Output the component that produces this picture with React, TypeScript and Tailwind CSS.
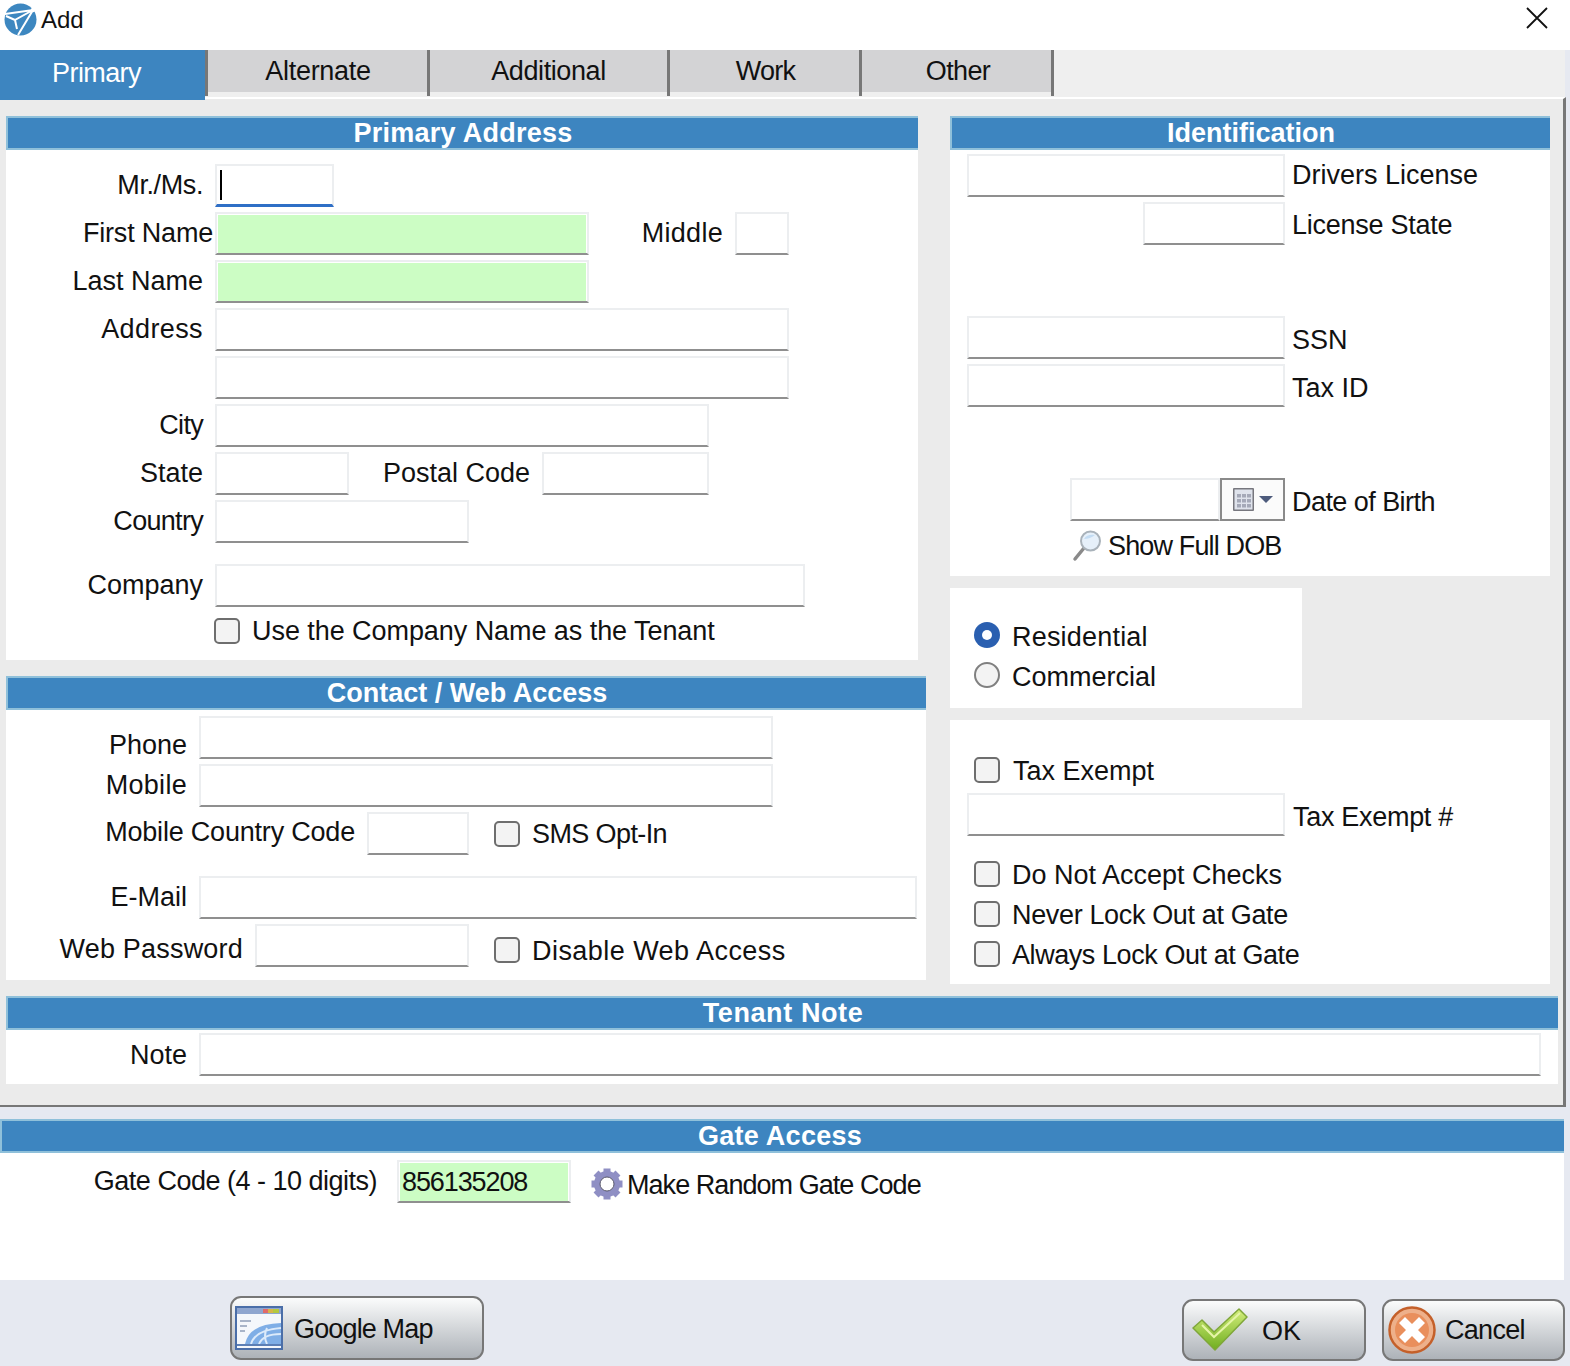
import type { ReactNode } from 'react';

const TABS = [
  { label: 'Alternate', w: 'w-[222px]', track: 'tracking-[-0.3px] pl-[1px]' },
  { label: 'Additional', w: 'w-[240px]', track: 'tracking-[-0.4px]' },
  { label: 'Work', w: 'w-[192px]', track: 'tracking-[-0.7px] pl-[2px]' },
  { label: 'Other', w: 'w-[192px]', track: 'tracking-[-0.6px] pl-[3px]' },
];

const LOCK_ROWS = [
  { label: 'Do Not Accept Checks', track: '' },
  { label: 'Never Lock Out at Gate', track: 'tracking-[-0.35px]' },
  { label: 'Always Lock Out at Gate', track: 'tracking-[-0.43px]' },
];

function Input({ className = '', green = false, children }: { className?: string; green?: boolean; children?: ReactNode }) {
  return (
    <div className={`h-[43px] shrink-0 bg-white border-2 border-[#eceef0] border-b-[#8f8f8f] ${className}`}>
      {green ? <div className="h-[calc(100%-1px)] mt-[1px] mx-[1px] bg-[#ccfdc4]">{children}</div> : children}
    </div>
  );
}

function Label({ className = '', lh = 'leading-[42px]', children }: { className?: string; lh?: string; children: ReactNode }) {
  return <div className={`h-[43px] shrink-0 whitespace-nowrap ${lh} ${className}`}>{children}</div>;
}

function Header({ title, className = '' }: { title: string; className?: string }) {
  return (
    <div className={`h-[34px] bg-[#3d85c0] border-y-2 border-l-2 border-[#8fc0da] text-white font-bold text-center leading-[30px] ${className}`}>
      {title}
    </div>
  );
}

function Check({ className = '' }: { className?: string }) {
  return <div className={`w-[26px] h-[26px] shrink-0 bg-[#f3f3f3] border-2 border-[#6e6e6e] rounded-[5px] ${className}`} />;
}

function Radio({ on = false }: { on?: boolean }) {
  if (on) {
    return (
      <div className="w-[26px] h-[26px] shrink-0 rounded-full bg-[#2a5fb0] flex items-center justify-center">
        <div className="w-[10px] h-[10px] rounded-full bg-white" />
      </div>
    );
  }
  return <div className="w-[26px] h-[26px] shrink-0 rounded-full bg-[#f3f3f3] border-2 border-[#808080]" />;
}

function LogoIcon() {
  return (
    <svg width="33" height="33" viewBox="0 0 33 33" className="shrink-0">
      <circle cx="16.5" cy="16.5" r="16" fill="#3d87c0" />
      <path d="M1 11 L29 7 L14 32 M29 7 L11 17 L13 26 M11 17 L2 13" fill="none" stroke="#fff" strokeWidth="2" />
      <circle cx="29" cy="7" r="2.2" fill="#fff" />
    </svg>
  );
}

function CalendarIcon() {
  return (
    <svg width="24" height="25" viewBox="0 0 24 25">
      <rect x="1" y="1" width="21" height="23" rx="1" fill="#77777e" />
      <rect x="2.5" y="2.5" width="18" height="20" fill="#dfe3ec" />
      <g fill="#a5a9b8">
        <rect x="5" y="7" width="4" height="3.5" />
        <rect x="10" y="7" width="4" height="3.5" />
        <rect x="15" y="7" width="4" height="3.5" />
        <rect x="5" y="12" width="4" height="3.5" />
        <rect x="10" y="12" width="4" height="3.5" />
        <rect x="15" y="12" width="4" height="3.5" />
        <rect x="5" y="17" width="4" height="3.5" />
        <rect x="10" y="17" width="4" height="3.5" />
        <rect x="15" y="17" width="4" height="3.5" />
      </g>
    </svg>
  );
}

function MagnifierIcon() {
  return (
    <svg width="30" height="32" viewBox="0 0 30 32" className="shrink-0">
      <path d="M12 18 L3 29" stroke="#8a8a8a" strokeWidth="3.5" strokeLinecap="round" />
      <circle cx="18.5" cy="11" r="9.5" fill="#e6f0fa" stroke="#a9b2ba" strokeWidth="2" />
      <path d="M12 9 Q15 4 23 5 Q18 9 12 9" fill="#c3dcf3" />
    </svg>
  );
}

function GearIcon() {
  return (
    <svg width="32" height="32" viewBox="0 0 32 32" className="shrink-0">
      <g fill="#8f8fc4">
        {[0, 45, 90, 135, 180, 225, 270, 315].map((a) => (
          <rect key={a} x="12.5" y="0.5" width="7" height="7" transform={`rotate(${a} 16 16)`} />
        ))}
      </g>
      <circle cx="16" cy="16" r="10" fill="none" stroke="#8f8fc4" strokeWidth="6" />
      <circle cx="16" cy="16" r="7" fill="#fff" stroke="#55556a" strokeWidth="1" />
    </svg>
  );
}

function MapIcon() {
  return (
    <svg width="48" height="44" viewBox="0 0 48 44" className="shrink-0">
      <rect x="1" y="1" width="46" height="42" fill="#f4f7fb" stroke="#4a6ea8" strokeWidth="2" />
      <rect x="2" y="2" width="44" height="6" fill="#8fa6cf" />
      <rect x="28" y="3" width="5" height="4" fill="#e06a6a" />
      <rect x="33" y="3" width="5" height="4" fill="#d7b54a" />
      <rect x="38" y="3" width="6" height="4" fill="#b5c93f" />
      <path d="M5 15 H16 M5 20 H12 M5 25 H10" stroke="#8f9fb8" strokeWidth="1.5" />
      <path d="M10 38 Q14 18 46 17 V38 Z" fill="#7faee6" />
      <path d="M16 38 Q20 24 46 22 M24 38 Q28 28 46 28 M32 22 Q28 30 32 38" stroke="#dceafa" strokeWidth="2" fill="none" />
      <rect x="2" y="38" width="44" height="2" fill="#5c7fb5" />
    </svg>
  );
}

function CheckIcon() {
  return (
    <svg width="56" height="44" viewBox="0 0 56 44" className="shrink-0">
      <defs>
        <linearGradient id="okGrad" x1="0" y1="0" x2="0" y2="1">
          <stop offset="0" stopColor="#d4ee7c" />
          <stop offset="1" stopColor="#6fae1f" />
        </linearGradient>
      </defs>
      <path d="M1 20 L10 12 L22 24 L47 1 L55 9 L23 42 Z" fill="url(#okGrad)" stroke="#7fa63a" strokeWidth="1.5" strokeLinejoin="round" />
      <path d="M10 17 L22 29 L48 5" fill="none" stroke="#e6f5a8" strokeWidth="2" />
    </svg>
  );
}

function CancelIcon() {
  return (
    <svg width="48" height="48" viewBox="0 0 48 48" className="shrink-0">
      <circle cx="24" cy="24" r="22.5" fill="#eeb08a" stroke="#c4602a" strokeWidth="2.5" />
      <circle cx="24" cy="24" r="17" fill="#e98f5c" />
      <path d="M11 17 L17 11 L24 18 L31 11 L37 17 L30 24 L37 31 L31 37 L24 30 L17 37 L11 31 L18 24 Z" fill="#fff" />
    </svg>
  );
}

function Button({ className = '', children }: { className?: string; children: ReactNode }) {
  return (
    <div className={`flex items-center shrink-0 border-2 border-[#777777] rounded-[11px] bg-gradient-to-b from-[#fbfcfc] to-[#adb2b8] ${className}`}>
      {children}
    </div>
  );
}

function PrimaryAddress() {
  return (
    <div className="bg-white h-[544px]">
      <Header title="Primary Address" className="tracking-[0.27px]" />
      <div className="pt-[14px]">
        <div className="flex h-[48px]">
          <Label className="w-[197px] text-right tracking-[-0.4px]">Mr./Ms.</Label>
          <Input className="ml-[12px] w-[119px] !border-b-[3px] !border-b-[#2f6fc6] pl-[3px] pt-[4px]">
            <div className="w-[2px] h-[30px] bg-black" />
          </Input>
        </div>
        <div className="flex h-[48px]">
          <Label className="w-[207px] text-right tracking-[-0.2px]">First Name</Label>
          <Input className="ml-[2px] w-[374px]" green />
          <Label className="w-[134px] text-right tracking-[0.3px]">Middle</Label>
          <Input className="ml-[12px] w-[54px]" />
        </div>
        <div className="flex h-[48px]">
          <Label className="w-[197px] text-right">Last Name</Label>
          <Input className="ml-[12px] w-[374px]" green />
        </div>
        <div className="flex h-[48px]">
          <Label className="w-[197px] text-right tracking-[0.4px]">Address</Label>
          <Input className="ml-[12px] w-[574px]" />
        </div>
        <div className="flex h-[48px] pl-[209px]">
          <Input className="w-[574px]" />
        </div>
        <div className="flex h-[48px]">
          <Label className="w-[197px] text-right tracking-[-0.7px]">City</Label>
          <Input className="ml-[12px] w-[494px]" />
        </div>
        <div className="flex h-[48px]">
          <Label className="w-[197px] text-right">State</Label>
          <Input className="ml-[12px] w-[134px]" />
          <Label className="w-[181px] text-right">Postal Code</Label>
          <Input className="ml-[12px] w-[167px]" />
        </div>
        <div className="flex h-[64px]">
          <Label className="w-[197px] text-right tracking-[-0.7px]">Country</Label>
          <Input className="ml-[12px] w-[254px]" />
        </div>
        <div className="flex h-[46px]">
          <Label className="w-[197px] text-right">Company</Label>
          <Input className="ml-[12px] w-[590px]" />
        </div>
        <div className="flex items-center h-[42px] pl-[208px] gap-[12px]">
          <Check />
          <span className="tracking-[-0.06px]">Use the Company Name as the Tenant</span>
        </div>
      </div>
    </div>
  );
}

function ContactAccess() {
  return (
    <div className="bg-white h-[304px] w-[920px] mt-[16px]">
      <Header title="Contact / Web Access" />
      <div className="pt-[6px]">
        <div className="flex h-[48px]">
          <Label className="w-[181px] text-right" lh="leading-[58px]">Phone</Label>
          <Input className="ml-[12px] w-[574px]" />
        </div>
        <div className="flex h-[48px]">
          <Label className="w-[181px] text-right tracking-[0.3px]" lh="leading-[42px]">Mobile</Label>
          <Input className="ml-[12px] w-[574px]" />
        </div>
        <div className="flex h-[64px]">
          <Label className="w-[349px] text-right tracking-[-0.2px]" lh="leading-[40px]">Mobile Country Code</Label>
          <Input className="ml-[12px] w-[102px]" />
          <div className="flex items-center h-[43px] ml-[25px] gap-[12px]">
            <Check />
            <span className="mt-[2px] tracking-[-0.6px]">SMS Opt-In</span>
          </div>
        </div>
        <div className="flex h-[48px]">
          <Label className="w-[181px] text-right">E-Mail</Label>
          <Input className="ml-[12px] w-[718px]" />
        </div>
        <div className="flex h-[48px]">
          <Label className="w-[237px] text-right tracking-[0.2px]" lh="leading-[50px]">Web Password</Label>
          <Input className="ml-[12px] w-[214px]" />
          <div className="flex items-center h-[43px] ml-[25px] gap-[12px] mt-[4px]">
            <Check />
            <span className="mt-[4px] tracking-[0.45px]">Disable Web Access</span>
          </div>
        </div>
      </div>
    </div>
  );
}

function Identification() {
  return (
    <div className="bg-white h-[460px]">
      <Header title="Identification" />
      <div className="pt-[4px]">
        <div className="flex h-[48px]">
          <div className="w-[335px] flex justify-end"><Input className="w-[318px]" /></div>
          <Label className="ml-[7px]">Drivers License</Label>
        </div>
        <div className="flex h-[114px]">
          <div className="w-[335px] flex justify-end"><Input className="w-[142px]" /></div>
          <Label className="ml-[7px] tracking-[-0.25px]" lh="leading-[46px]">License State</Label>
        </div>
        <div className="flex h-[48px]">
          <div className="w-[335px] flex justify-end"><Input className="w-[318px]" /></div>
          <Label className="ml-[7px]" lh="leading-[48px]">SSN</Label>
        </div>
        <div className="flex h-[114px]">
          <div className="w-[335px] flex justify-end"><Input className="w-[318px]" /></div>
          <Label className="ml-[7px]" lh="leading-[48px]">Tax ID</Label>
        </div>
        <div className="flex h-[48px]">
          <div className="w-[335px] flex justify-end">
            <Input className="w-[150px]" />
            <div className="w-[65px] h-[43px] shrink-0 border-2 border-[#8a8a8a] bg-[#fbfbfb] flex items-center justify-center gap-[3px]">
              <CalendarIcon />
              <svg width="14" height="7" viewBox="0 0 14 7"><path d="M0 0 H14 L7 7 Z" fill="#4d5b7c" /></svg>
            </div>
          </div>
          <Label className="ml-[7px] tracking-[-0.55px]" lh="leading-[48px]">Date of Birth</Label>
        </div>
        <div className="flex items-center h-[40px] pl-[122px] gap-[6px]">
          <MagnifierIcon />
          <span className="tracking-[-0.85px]">Show Full DOB</span>
        </div>
      </div>
    </div>
  );
}

function CustomerType() {
  return (
    <div className="bg-white h-[120px] w-[352px] mt-[12px] pt-[27px] pl-[24px]">
      <div className="flex items-center h-[40px] gap-[12px]">
        <Radio on />
        <span className="mt-[4px] tracking-[0.2px]">Residential</span>
      </div>
      <div className="flex items-center h-[40px] gap-[12px]">
        <Radio />
        <span className="mt-[4px]">Commercial</span>
      </div>
    </div>
  );
}

function TaxOptions() {
  return (
    <div className="bg-white h-[264px] mt-[12px] pt-[30px]">
      <div className="flex items-center h-[40px] pl-[24px] gap-[13px]">
        <Check />
        <span className="mt-[2px]">Tax Exempt</span>
      </div>
      <div className="flex h-[61px] mt-[3px]">
        <div className="w-[335px] flex justify-end"><Input className="w-[318px]" /></div>
        <Label className="ml-[8px] tracking-[-0.3px]" lh="leading-[48px]">Tax Exempt #</Label>
      </div>
      {LOCK_ROWS.map((r) => (
        <div key={r.label} className="flex items-center h-[40px] pl-[24px] gap-[12px]">
          <Check />
          <span className={`mt-[2px] ${r.track}`}>{r.label}</span>
        </div>
      ))}
    </div>
  );
}

export default function App() {
  return (
    <div className="w-[1570px] h-[1366px] overflow-hidden bg-[#e6e9f1] text-[27px] text-[#111111] font-['Liberation_Sans',Arial,sans-serif]">
      {/* Title bar */}
      <div className="h-[50px] bg-white flex items-start pl-[4px] pt-[3px]">
        <div className="flex items-center h-[33px]">
          <LogoIcon />
          <span className="ml-[4px] text-[24px]">Add</span>
        </div>
        <svg width="22" height="22" viewBox="0 0 22 22" className="ml-auto mr-[22px] mt-[4px]">
          <path d="M1 1 L21 21 M21 1 L1 21" stroke="#111" strokeWidth="1.8" />
        </svg>
      </div>

      {/* Tabs */}
      <div className="h-[47px] w-[1565px] bg-[#efefef] flex items-start">
        <div className="w-[205px] h-[50px] shrink-0 bg-[#3d85c0] text-white text-center pr-[12px] tracking-[-0.6px] leading-[46px] relative z-10">Primary</div>
        <div className="w-[3px] h-[46px] shrink-0 bg-[#777777]" />
        {TABS.map((t) => (
          <div key={t.label} className={`${t.w} h-[46px] flex shrink-0`}>
            <div className={`flex-1 h-[42px] bg-[#d3d3d5] text-center leading-[42px] ${t.track}`}>{t.label}</div>
            <div className="w-[3px] h-[46px] bg-[#777777]" />
          </div>
        ))}
      </div>

      {/* Main panel */}
      <div className="w-[1566px] h-[1010px] bg-[#ebebeb] border-t-2 border-t-white border-r-[3px] border-r-[#777777] border-b-2 border-b-[#777777] pt-[17px] pl-[6px]">
        <div className="flex">
          <div className="w-[912px]">
            <PrimaryAddress />
            <ContactAccess />
          </div>
          <div className="w-[600px] ml-[32px]">
            <Identification />
            <CustomerType />
            <TaxOptions />
          </div>
        </div>
        <div className="bg-white h-[88px] w-[1552px] mt-[12px]">
          <Header title="Tenant Note" className="tracking-[0.6px]" />
          <div className="flex pt-[3px]">
            <Label className="w-[181px] text-right" lh="leading-[44px]">Note</Label>
            <Input className="ml-[12px] w-[1342px]" />
          </div>
        </div>
      </div>

      {/* Gate access */}
      <div className="bg-white w-[1564px] h-[161px] mt-[12px]">
        <Header title="Gate Access" className="pr-[6px] tracking-[0.27px]" />
        <div className="flex pt-[7px]">
          <Label className="w-[377px] text-right tracking-[-0.5px]">Gate Code (4 - 10 digits)</Label>
          <Input className="ml-[20px] w-[174px]" green>
            <div className="pl-[2px] leading-[38px] tracking-[-1.1px]">856135208</div>
          </Input>
          <div className="flex items-center h-[43px] ml-[20px] gap-[4px] mt-[2px]">
            <GearIcon />
            <span className="mt-[4px] tracking-[-0.95px]">Make Random Gate Code</span>
          </div>
        </div>
      </div>

      {/* Footer */}
      <div className="flex items-start pt-[16px] pl-[230px]">
        <Button className="w-[254px] h-[64px] pl-[3px] gap-[11px]">
          <MapIcon />
          <span className="mt-[2px] tracking-[-0.85px]">Google Map</span>
        </Button>
        <Button className="w-[184px] h-[62px] ml-[698px] mt-[3px] pl-[8px] gap-[14px]">
          <CheckIcon />
          <span className="mt-[2px]">OK</span>
        </Button>
        <Button className="w-[183px] h-[62px] ml-[16px] mt-[3px] pl-[4px] gap-[9px]">
          <CancelIcon />
          <span className="tracking-[-0.7px]">Cancel</span>
        </Button>
      </div>
    </div>
  );
}
